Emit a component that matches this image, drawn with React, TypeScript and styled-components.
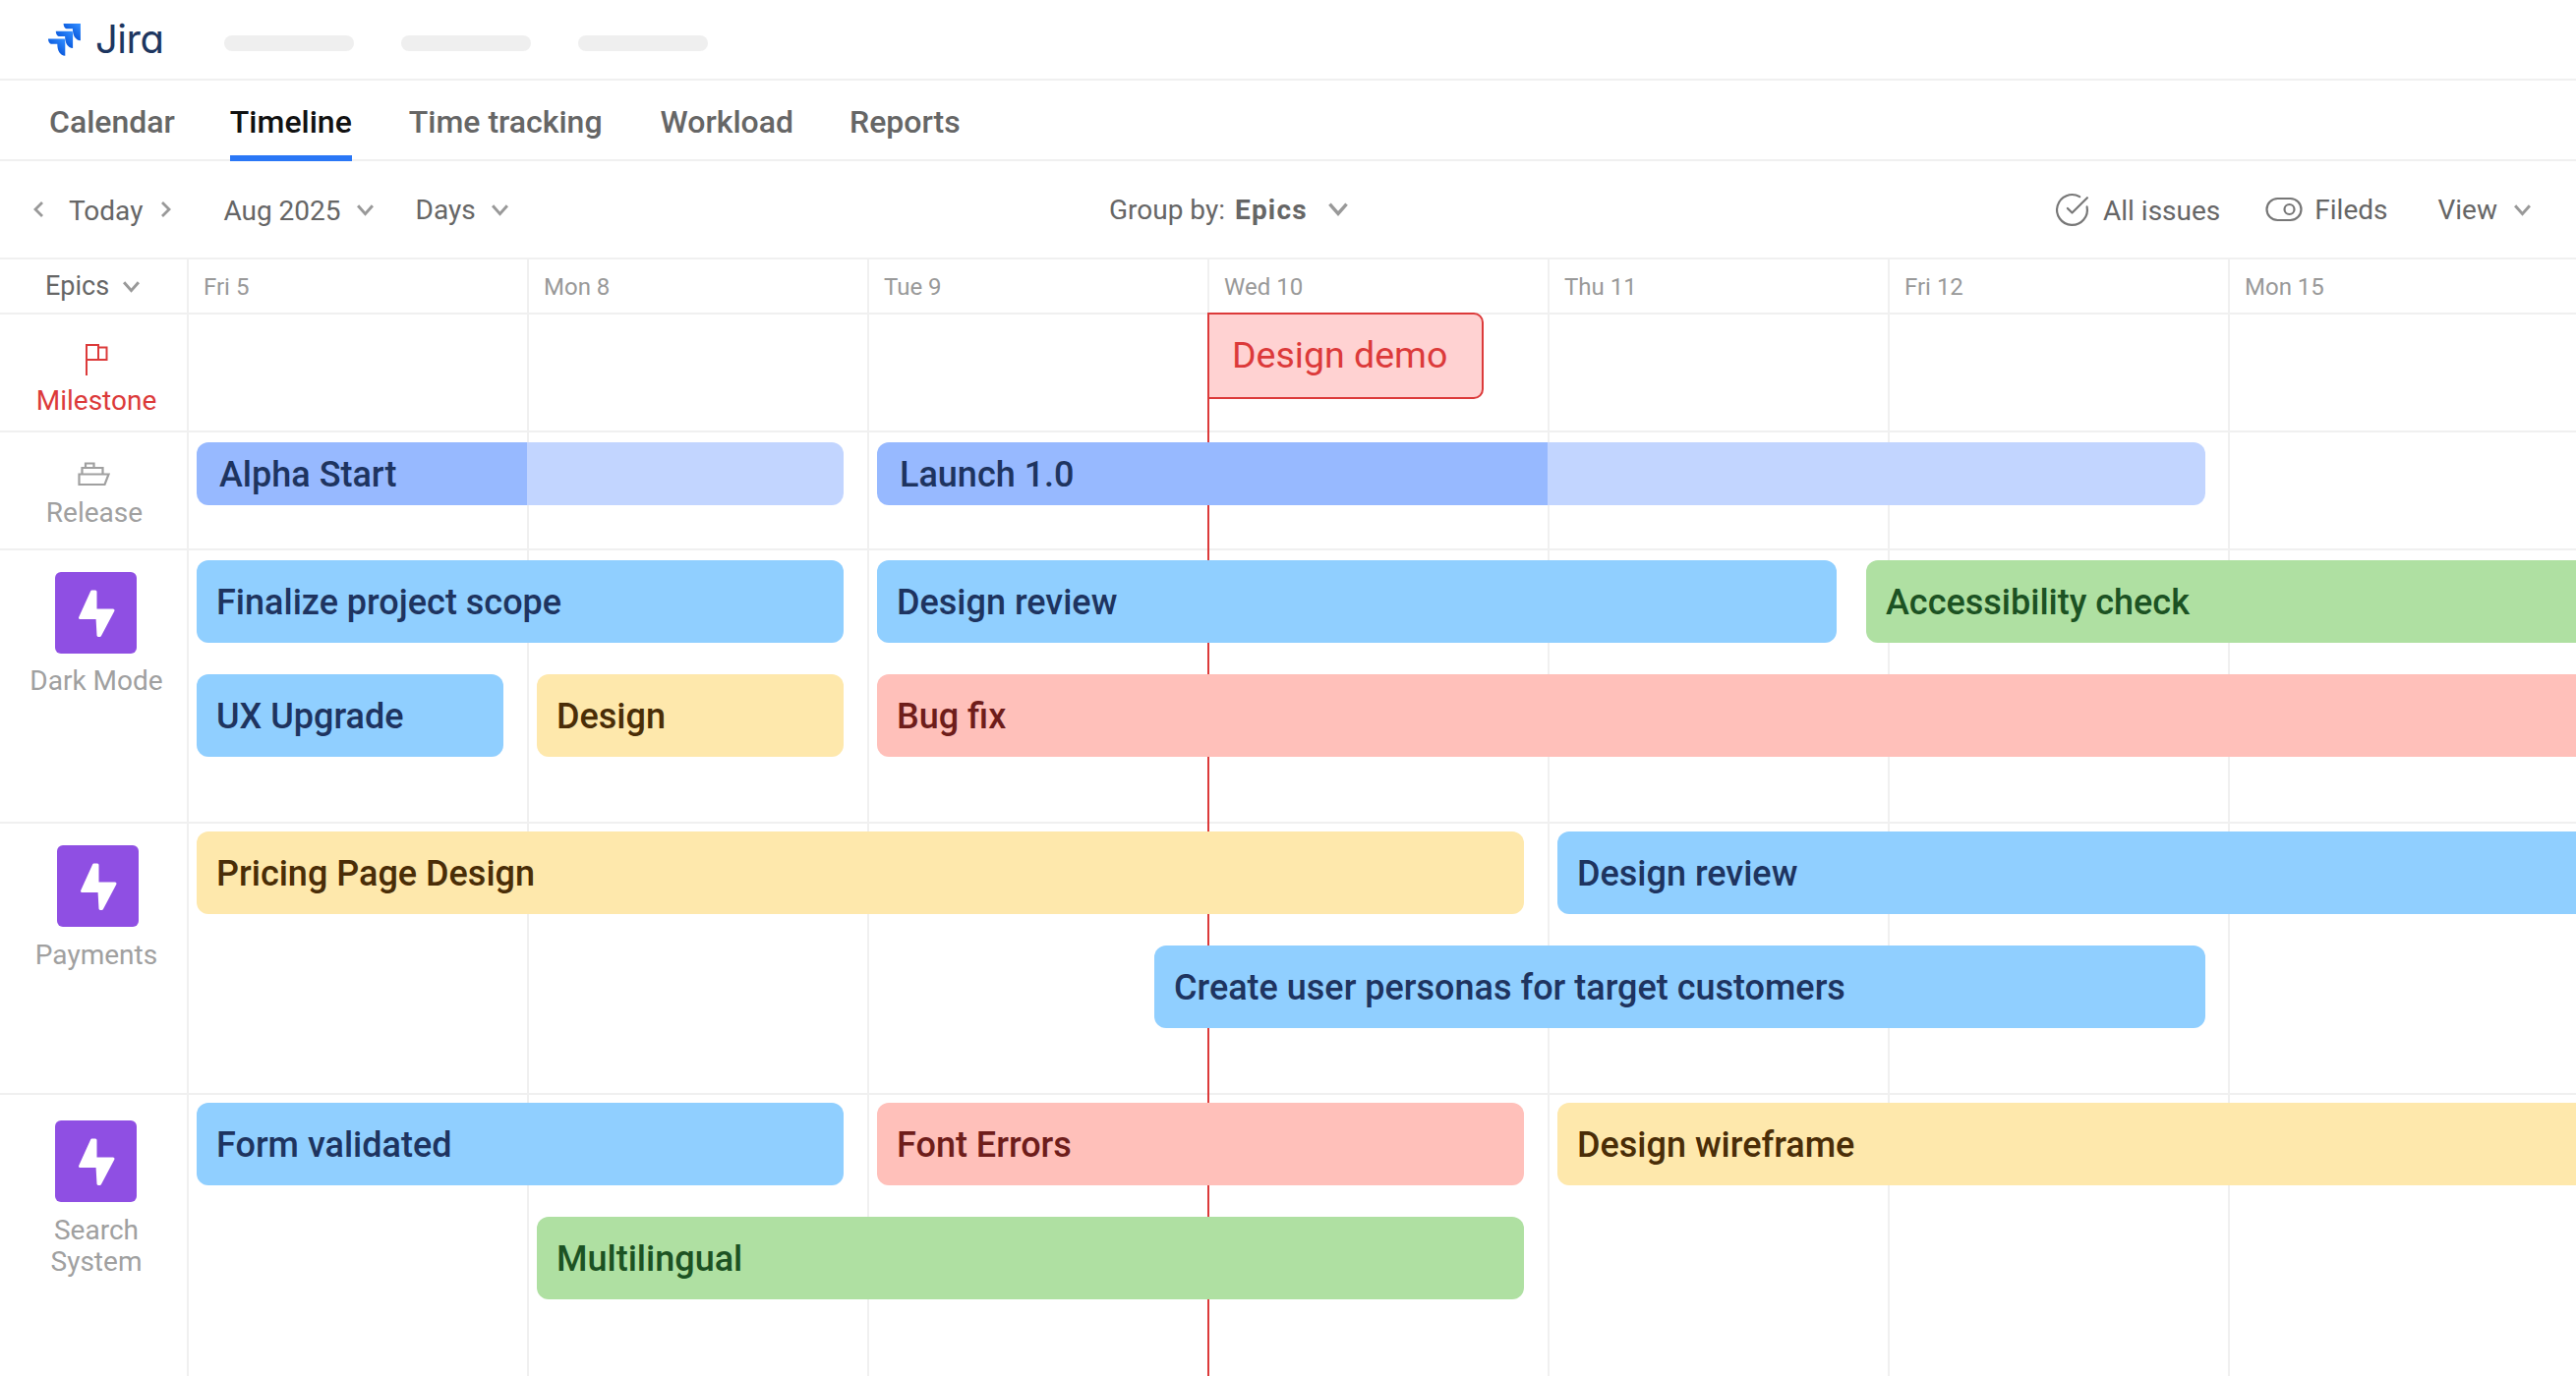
import React from 'react';
import styled, { createGlobalStyle } from 'styled-components';
import { CircleCheckBig } from 'lucide-react';

const LINE = '#f0f0f0';
const DAY_W = 346;
const SIDE_W = 190;

const GlobalStyle = createGlobalStyle`
  html, body { margin: 0; padding: 0; background: #fff; overflow: hidden; }
  body { font-family: Roboto, "Liberation Sans", sans-serif; }
`;

const Page = styled.div`
  width: 2620px;
  height: 1400px;
  overflow: hidden;
  display: flex;
  flex-direction: column;
`;

//--------------- top bar
const TopBar = styled.header`
  height: 80px;
  flex: none;
  box-sizing: content-box;
  border-bottom: 2px solid ${LINE};
  display: flex;
  align-items: center;
  padding-left: 49px;
`;

const LogoText = styled.span`
  font-family: Inter, sans-serif;
  font-feature-settings: 'cv11' 1;
  font-size: 40px;
  line-height: 44px;
  color: #1d3660;
  margin-left: 15px;
  width: 131px;
  letter-spacing: -0.5px;
  flex: none;
`;

const Skeleton = styled.div`
  width: 132px;
  height: 16px;
  border-radius: 8px;
  background: #efefef;
  margin-right: 48px;
  margin-top: 7px;
  flex: none;
`;

//--------------- tabs
const Tabs = styled.nav`
  height: 80px;
  flex: none;
  border-bottom: 2px solid ${LINE};
  display: flex;
  padding-left: 50px;
`;

const Tab = styled.div<{ $active?: boolean; $gap?: number }>`
  font-size: 32px;
  font-weight: 500;
  line-height: 84px;
  height: 82px;
  margin-left: ${(p) => p.$gap ?? 0}px;
  color: ${(p) => (p.$active ? '#111' : '#666')};
  ${(p) => p.$active && `box-shadow: inset 0 -6px 0 #2a77f6;`}
`;

//--------------- toolbar
const Toolbar = styled.div`
  height: 98px;
  flex: none;
  border-bottom: 2px solid ${LINE};
  display: grid;
  grid-template-columns: 1128px 1fr auto;
  align-items: center;
  font-size: 28px;
  color: #666;
`;

const ToolGroup = styled.div`
  display: flex;
  align-items: center;
`;

const LeftTools = styled(ToolGroup)`
  padding-left: 33px;
`;

const RightTools = styled(ToolGroup)`
  padding-right: 45px;
`;

const ToolLabel = styled.span<{ $ml?: number; $mr?: number; $low?: boolean }>`
  margin-left: ${(p) => p.$ml ?? 0}px;
  margin-right: ${(p) => p.$mr ?? 0}px;
  padding-top: ${(p) => (p.$low ? 3 : 0)}px;
  white-space: nowrap;
`;

const Strong = styled.b`
  font-weight: 700;
  margin-left: 10px;
  letter-spacing: 1.2px;
`;

const Chevron = ({ dir = 'down', w = 19 }: { dir?: 'down' | 'left' | 'right'; w?: number }) => {
  const d = dir === 'down' ? 'M2 3l7 8 7-8' : dir === 'left' ? 'M10 2L3 9l7 7' : 'M3 2l7 7-7 7';
  const box = dir === 'down' ? '0 0 18 14' : '0 0 13 18';
  const h = dir === 'down' ? (w * 14) / 18 : (w * 18) / 13;
  return (
    <svg width={w} height={h} viewBox={box} fill="none" stroke="#999" strokeWidth="2.8">
      <path d={d} />
    </svg>
  );
};

//--------------- day header
const DayRow = styled.div`
  height: 54px;
  flex: none;
  border-bottom: 2px solid ${LINE};
  display: flex;
`;

const EpicsCell = styled.div`
  width: ${SIDE_W}px;
  flex: none;
  display: flex;
  align-items: center;
  padding-left: 46px;
  box-sizing: border-box;
  gap: 13px;
  font-size: 27px;
  color: #666;
`;

const DayCell = styled.div`
  width: ${DAY_W}px;
  flex: none;
  box-sizing: border-box;
  border-left: 2px solid ${LINE};
  padding-left: 15px;
  font-size: 24px;
  line-height: 57px;
  color: #999;
`;

//--------------- timeline body
const Body = styled.div`
  position: relative;
  flex: 1;
  min-height: 0;
`;

const TodayLine = styled.div`
  position: absolute;
  left: 1228px;
  top: 0;
  bottom: 0;
  width: 2px;
  background: #dc3a3a;
`;

const Row = styled.section<{ $h: number }>`
  height: ${(p) => p.$h}px;
  box-sizing: border-box;
  border-bottom: 2px solid ${LINE};
  display: flex;
  &:last-child {
    border-bottom: none;
  }
`;

const Side = styled.div<{ $pt: number; $gap: number; $dx?: number }>`
  width: ${SIDE_W}px;
  flex: none;
  box-sizing: border-box;
  display: flex;
  flex-direction: column;
  align-items: center;
  padding-top: ${(p) => p.$pt}px;
  gap: ${(p) => p.$gap}px;
  padding-left: ${(p) => p.$dx ?? 6}px;
`;

const SideLabel = styled.div<{ $red?: boolean }>`
  font-size: 28px;
  line-height: 32px;
  text-align: center;
  color: ${(p) => (p.$red ? '#dc3a3a' : '#a0a0a0')};
`;

const EpicIcon = styled.div<{ $dx?: number }>`
  width: 83px;
  height: 83px;
  border-radius: 6px;
  background: #8f4fe3;
  display: flex;
  margin-left: ${(p) => p.$dx ?? -2}px;
`;

const Lane = styled.div<{ $pt: number }>`
  flex: 1;
  min-width: 0;
  display: flex;
  flex-direction: column;
  gap: 32px;
  padding-top: ${(p) => p.$pt}px;
  background-image: repeating-linear-gradient(to right, ${LINE} 0 2px, transparent 2px ${DAY_W}px);
  background-size: ${DAY_W * 7}px 100%;
  background-repeat: no-repeat;
`;

const BarRow = styled.div`
  display: flex;
  position: relative;
`;

const palette = {
  blue: ['#90cfff', '#1e3460'],
  yellow: ['#fee8ac', '#4a2d07'],
  red: ['#ffc0ba', '#6e1d1b'],
  green: ['#afe0a2', '#1c5223'],
};

// $x is the gap to what stands before the bar, $w is the bar width
const Bar = styled.div<{ $x: number; $w: number; $tone: keyof typeof palette }>`
  flex: none;
  box-sizing: border-box;
  margin-left: ${(p) => p.$x}px;
  width: ${(p) => p.$w}px;
  height: 84px;
  padding-left: 20px;
  border-radius: 12px;
  background: ${(p) => palette[p.$tone][0]};
  color: ${(p) => palette[p.$tone][1]};
  font-size: 36px;
  font-weight: 500;
  line-height: 86px;
  white-space: nowrap;
`;

const ReleaseBar = styled.div<{ $x: number; $w: number; $done: number }>`
  flex: none;
  box-sizing: border-box;
  margin-left: ${(p) => p.$x}px;
  width: ${(p) => p.$w}px;
  height: 64px;
  padding-left: 23px;
  border-radius: 12px;
  background: linear-gradient(to right, #97b9ff ${(p) => p.$done}px, #c2d5ff ${(p) => p.$done}px);
  color: #1e3460;
  font-size: 36px;
  font-weight: 500;
  line-height: 66px;
  white-space: nowrap;
`;

const Demo = styled.div`
  margin-left: 1038px;
  margin-top: -2px;
  width: 281px;
  height: 88px;
  box-sizing: border-box;
  border: 2px solid #dc3a3a;
  border-radius: 0 10px 10px 0;
  background: #ffd2d2;
  color: #dc3a3a;
  font-size: 37.5px;
  line-height: 82px;
  padding-left: 23px;
  position: relative;
`;

//--------------- drawings
const MARK = 'M0 0H17.300V17.300C12 17 9.300 12 9.300 5.300H4C1.500 5.300 0 3 0 0Z';

const JiraMark = () => (
  <svg width="33" height="33" viewBox="0 0 33 33">
    <defs>
      <linearGradient id="jm" x1="0.9" y1="0.05" x2="0.45" y2="0.55">
        <stop offset="0" stopColor="#2f8bff" />
        <stop offset="1" stopColor="#0f5fe0" />
      </linearGradient>
    </defs>
    <path d={MARK} transform="translate(0 15.400)" fill="url(#jm)" />
    <path d={MARK} transform="translate(7.800 7.700)" fill="url(#jm)" stroke="#fff" strokeWidth="0.7" paintOrder="stroke" />
    <path d={MARK} transform="translate(15.600 0)" fill="url(#jm)" stroke="#fff" strokeWidth="0.7" paintOrder="stroke" />
  </svg>
);

const ToggleIcon = () => (
  <svg width="38" height="26" viewBox="0 0 38 26" fill="none" stroke="#777" strokeWidth="2.2">
    <rect x="1.500" y="2" width="35" height="22" rx="11" />
    <circle cx="24.500" cy="13" r="5" />
  </svg>
);

const FlagIcon = () => (
  <svg width="24" height="34" viewBox="0 0 24 34" fill="none" stroke="#dc3a3a" strokeWidth="2">
    <path d="M2 33V2h12v15H2" />
    <path d="M14 4.500h8.500V17H14" />
  </svg>
);

const ShipIcon = () => (
  <svg width="34" height="25" viewBox="0 0 34 25" fill="none" stroke="#a0a0a0" strokeWidth="2.2">
    <path d="M8 6V1.500h8.500V6" />
    <path d="M4.500 12.500V6h21v6.500" />
    <path d="M1.500 12.500h30L27.500 23H1.500z" />
  </svg>
);

const BoltIcon = () => (
  <svg width="83" height="83" viewBox="0 0 83 83" fill="#fff" stroke="#fff" strokeWidth="3" strokeLinejoin="round">
    <path d="M37.500 20h3.500v19h18L45.500 64.500h-1.500L43 46.500H25.500z" />
  </svg>
);

const days = ['Fri 5', 'Mon 8', 'Tue 9', 'Wed 10', 'Thu 11', 'Fri 12', 'Mon 15'];

export default function App() {
  return (
    <Page>
      <GlobalStyle />
      <TopBar>
        <JiraMark />
        <LogoText>Jira</LogoText>
        <Skeleton />
        <Skeleton />
        <Skeleton />
      </TopBar>

      <Tabs>
        <Tab>Calendar</Tab>
        <Tab $active $gap={56}>Timeline</Tab>
        <Tab $gap={58}>Time tracking</Tab>
        <Tab $gap={59}>Workload</Tab>
        <Tab $gap={57}>Reports</Tab>
      </Tabs>

      <Toolbar>
        <LeftTools>
          <Chevron dir="left" w={13} />
          <ToolLabel $ml={24} $mr={17} $low>Today</ToolLabel>
          <Chevron dir="right" w={13} />
          <ToolLabel $ml={52} $mr={15} $low>Aug 2025</ToolLabel>
          <Chevron />
          <ToolLabel $ml={42} $mr={15}>Days</ToolLabel>
          <Chevron />
        </LeftTools>
        <ToolGroup>
          <ToolLabel $mr={20}>Group by:<Strong>Epics</Strong></ToolLabel>
          <Chevron w={22} />
        </ToolGroup>
        <RightTools>
          <CircleCheckBig size={37} strokeWidth={1.4} color="#777" />
          <ToolLabel $ml={13} $mr={46} $low>All issues</ToolLabel>
          <ToggleIcon />
          <ToolLabel $ml={12} $mr={51}>Fileds</ToolLabel>
          <ToolLabel $mr={16}>View</ToolLabel>
          <Chevron />
        </RightTools>
      </Toolbar>

      <DayRow>
        <EpicsCell>
          Epics
          <Chevron />
        </EpicsCell>
        {days.map((d, i) => (
          <DayCell key={i}>{d}</DayCell>
        ))}
      </DayRow>

      <Body>
        <TodayLine />
        <Row $h={120}>
          <Side $pt={29} $gap={9}>
            <FlagIcon />
            <SideLabel $red>Milestone</SideLabel>
          </Side>
          <Lane $pt={0}>
            <Demo>Design demo</Demo>
          </Lane>
        </Row>
        <Row $h={120}>
          <Side $pt={30} $gap={11} $dx={2}>
            <ShipIcon />
            <SideLabel>Release</SideLabel>
          </Side>
          <Lane $pt={10}>
            <BarRow>
              <ReleaseBar $x={10} $w={658} $done={336}>Alpha Start</ReleaseBar>
              <ReleaseBar $x={34} $w={1351} $done={682}>Launch 1.0</ReleaseBar>
            </BarRow>
          </Lane>
        </Row>
        <Row $h={278}>
          <Side $pt={22} $gap={12}>
            <EpicIcon><BoltIcon /></EpicIcon>
            <SideLabel>Dark Mode</SideLabel>
          </Side>
          <Lane $pt={10}>
            <BarRow>
              <Bar $x={10} $w={658} $tone="blue">Finalize project scope</Bar>
              <Bar $x={34} $w={976} $tone="blue">Design review</Bar>
              <Bar $x={30} $w={800} $tone="green">Accessibility check</Bar>
            </BarRow>
            <BarRow>
              <Bar $x={10} $w={312} $tone="blue">UX Upgrade</Bar>
              <Bar $x={34} $w={312} $tone="yellow">Design</Bar>
              <Bar $x={34} $w={1800} $tone="red">Bug fix</Bar>
            </BarRow>
          </Lane>
        </Row>
        <Row $h={276}>
          <Side $pt={22} $gap={13}>
            <EpicIcon $dx={3}><BoltIcon /></EpicIcon>
            <SideLabel>Payments</SideLabel>
          </Side>
          <Lane $pt={8}>
            <BarRow>
              <Bar $x={10} $w={1350} $tone="yellow">Pricing Page Design</Bar>
              <Bar $x={34} $w={1200} $tone="blue">Design review</Bar>
            </BarRow>
            <BarRow>
              <Bar $x={984} $w={1069} $tone="blue">Create user personas for target customers</Bar>
            </BarRow>
          </Lane>
        </Row>
        <Row $h={286}>
          <Side $pt={26} $gap={13}>
            <EpicIcon><BoltIcon /></EpicIcon>
            <SideLabel>Search<br />System</SideLabel>
          </Side>
          <Lane $pt={8}>
            <BarRow>
              <Bar $x={10} $w={658} $tone="blue">Form validated</Bar>
              <Bar $x={34} $w={658} $tone="red">Font Errors</Bar>
              <Bar $x={34} $w={1200} $tone="yellow">Design wireframe</Bar>
            </BarRow>
            <BarRow>
              <Bar $x={356} $w={1004} $tone="green">Multilingual</Bar>
            </BarRow>
          </Lane>
        </Row>
      </Body>
    </Page>
  );
}
